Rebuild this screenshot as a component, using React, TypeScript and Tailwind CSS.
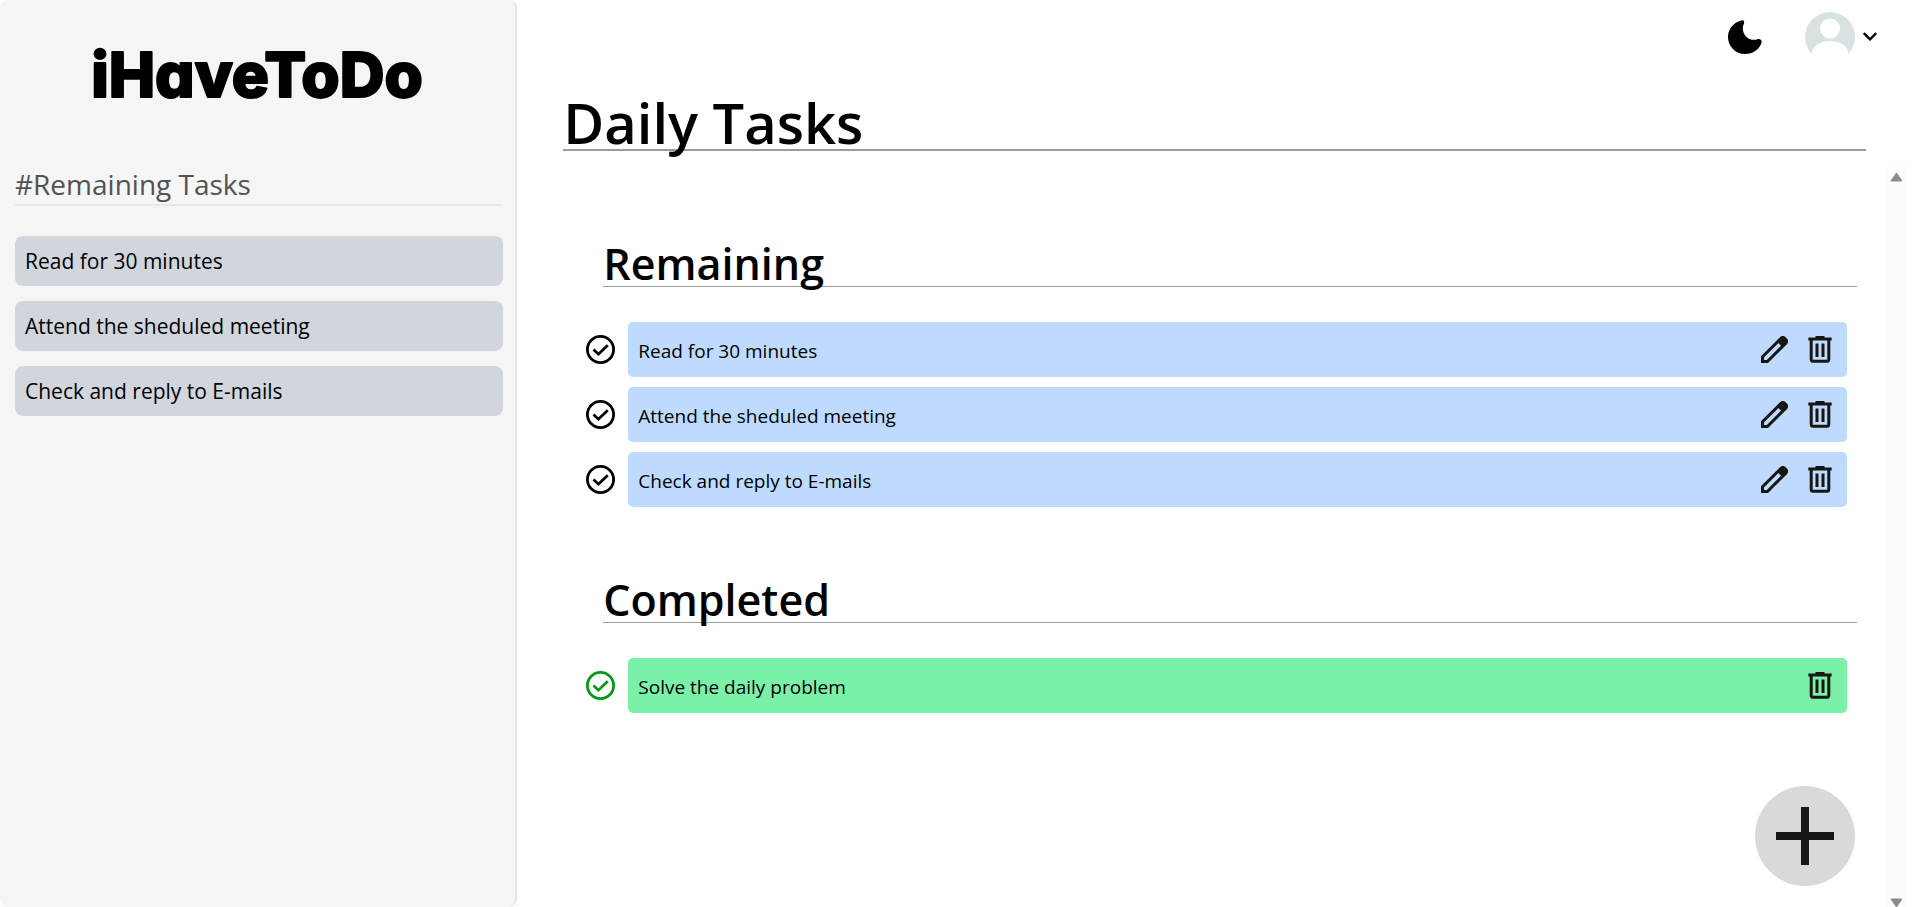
import React from "react";

type Task = { id: number; title: string };

const remaining: Task[] = [
  { id: 1, title: "Read for 30 minutes" },
  { id: 2, title: "Attend the sheduled meeting" },
  { id: 3, title: "Check and reply to E-mails" },
];

const completed: Task[] = [{ id: 4, title: "Solve the daily problem" }];

function CheckIcon() {
  return (
    <svg width="29" height="29" viewBox="0 0 29 29" fill="none" stroke="currentColor" aria-hidden="true">
      <circle cx="14.5" cy="14.5" r="13.1" strokeWidth="2.8" />
      <path d="M7.5 14.6l4.9 4.6 9.4-8.9" strokeWidth="2.8" />
    </svg>
  );
}

function PencilIcon() {
  return (
    <svg width="27" height="27" viewBox="0 0 27 27" fill="none" stroke="currentColor" aria-hidden="true">
      <path d="M1.500 20.800L20.200 2.100Q21.800.9 23.400 2.100l1.600 1.600q1.200 1.600 0 3.200L6.400 25.500H1.500z" strokeWidth="3" />
      <path d="M16.800 6l3.800-4.200q1.400-.9 2.800 0l2 2q.9 1.400 0 2.800l-4.200 3.800z" fill="currentColor" strokeWidth="1" />
    </svg>
  );
}

function TrashIcon() {
  return (
    <svg width="24" height="27" viewBox="0 0 24 27" fill="none" stroke="currentColor" aria-hidden="true">
      <path d="M.3 2.900h23.400M7.500 1.500h9" strokeWidth="3" />
      <path d="M3.200 3v20.600q0 1.600 1.600 1.600h14.400q1.600 0 1.600-1.600V3M9 7.500V21M15 7.500V21" strokeWidth="3" />
    </svg>
  );
}

function TaskRow({ task, done = false }: { task: Task; done?: boolean }) {
  return (
    <li className="flex items-center gap-[13px]">
      <button
        type="button"
        aria-label={done ? "Mark as remaining" : "Mark as completed"}
        className={done ? "text-[#009a17]" : "text-black"}
      >
        <CheckIcon />
      </button>
      <div
        className={
          done
            ? "flex h-[55px] flex-1 items-center rounded-[5px] bg-green-300 pr-[15px] pl-[10px]"
            : "flex h-[55px] flex-1 items-center rounded-[5px] bg-blue-200 pr-[15px] pl-[10px]"
        }
      >
        <span className="flex-1 pt-[2px] text-[19px] leading-7">{task.title}</span>
        <div className="flex items-center gap-5 text-[#171612]">
          {!done && (
            <button type="button" aria-label="Edit task">
              <PencilIcon />
            </button>
          )}
          <button type="button" aria-label="Delete task">
            <TrashIcon />
          </button>
        </div>
      </div>
    </li>
  );
}

function TaskSection({ title, tasks, done = false }: { title: string; tasks: Task[]; done?: boolean }) {
  return (
    <section>
      <h3 className="mr-[30px] ml-[40px] border-b border-[#9b9b9b] text-[43px] leading-[45px] font-semibold">
        {title}
      </h3>
      <ul className="mt-[35px] mr-[40px] ml-[23px] flex flex-col gap-[10px]">
        {tasks.map((task) => (
          <TaskRow key={task.id} task={task} done={done} />
        ))}
      </ul>
    </section>
  );
}

export default function App() {
  return (
    <div className="flex h-screen overflow-hidden bg-white font-['Open_Sans','Noto_Sans',sans-serif] text-black">
      <aside className="w-[27%] shrink-0 rounded-lg border-r-2 border-neutral-200 bg-neutral-100 pr-[12px] pl-[15px]">
        <h1 className="flex h-[164px] justify-center pt-[36px]">
          <svg width="360" height="80" viewBox="0 0 360 80" aria-label="iHaveToDo">
            <text
              x="178"
              y="61"
              textAnchor="middle"
              stroke="black"
              strokeWidth="2"
              strokeLinejoin="round"
              className="font-['Inter','Lato',sans-serif] text-[62px] font-extrabold [font-feature-settings:'cv11']"
            >
              iHaveToDo
            </text>
          </svg>
        </h1>
        <h2 className="border-b-2 border-gray-200 text-[28px] leading-10 text-neutral-600">#Remaining Tasks</h2>
        <ul className="mt-[30px] flex flex-col gap-[15px]">
          {remaining.map((task) => (
            <li key={task.id} className="flex h-[50px] items-center rounded-lg bg-gray-300 px-[10px] pt-[2px] text-[21px]">
              {task.title}
            </li>
          ))}
        </ul>
      </aside>

      <main className="relative flex min-w-0 flex-1 flex-col">
        <header className="flex h-[95px] items-start justify-end pt-[12px] pr-[39px]">
          <button type="button" aria-label="Toggle dark mode" className="mt-[8px] mr-[43px]">
            <svg width="34" height="34" viewBox="0 0 34 34" aria-hidden="true">
              <path
                d="M13.200.400C15.800-.2 16.800 1.500 15.900 3.700C12 12 19.500 22 29 19.400C31.800 18.500 34.200 19.800 33.500 22.800C31.500 29.500 25 34 17 34C7.500 34 0 26.500 0 17C0 8.800 5.500 2.200 13.200.400Z"
                fill="black"
              />
            </svg>
          </button>
          <button type="button" aria-label="Account menu" className="flex items-start gap-[8px]">
            <svg width="50" height="42" viewBox="0 0 50 42" aria-hidden="true">
              <circle cx="25" cy="25" r="25" fill="#d9e2e2" />
              <circle cx="25" cy="16.500" r="10" fill="white" />
              <path d="M6.500 42C7 34 15 29 25 29s18 5 18.500 13v8h-37z" fill="white" />
            </svg>
            <svg width="14" height="42" viewBox="0 0 14 42" fill="none" aria-hidden="true">
              <path d="M.7 21l6.300 6.300L13.300 21" stroke="black" strokeWidth="2.400" />
            </svg>
          </button>
        </header>
        <h2 className="mr-[50px] ml-[46px] border-b-2 border-[#9b9b9b] text-[56px] leading-[54px] font-semibold">
          Daily Tasks
        </h2>

        <div className="mt-[15px] mr-[10px] flex min-h-0 flex-1 pl-[46px]">
          <div className="flex min-w-0 flex-1 flex-col gap-[70px] pt-[75px]">
            <TaskSection title="Remaining" tasks={remaining} />
            <TaskSection title="Completed" tasks={completed} done />
          </div>
          <div className="flex w-[19px] shrink-0 flex-col items-center justify-between bg-[#fcfcfc] pt-[6px]">
            <svg width="13" height="10" viewBox="0 0 13 10" aria-hidden="true">
              <path d="M6.500 1L12 9H1z" fill="#8b8b8b" stroke="#8b8b8b" strokeLinejoin="round" />
            </svg>
            <svg width="13" height="9" viewBox="0 0 13 9" aria-hidden="true">
              <path d="M1 1h11L6.500 9z" fill="#8b8b8b" stroke="#8b8b8b" strokeLinejoin="round" />
            </svg>
          </div>
        </div>

        <button
          type="button"
          aria-label="Add task"
          className="absolute right-[61px] bottom-[21px] flex size-[100px] items-center justify-center rounded-full bg-[#d9d9d9]"
        >
          <svg width="58" height="58" viewBox="0 0 58 58" aria-hidden="true">
            <path d="M29 0v58M0 29h58" stroke="#171612" strokeWidth="8" />
          </svg>
        </button>
      </main>
    </div>
  );
}
